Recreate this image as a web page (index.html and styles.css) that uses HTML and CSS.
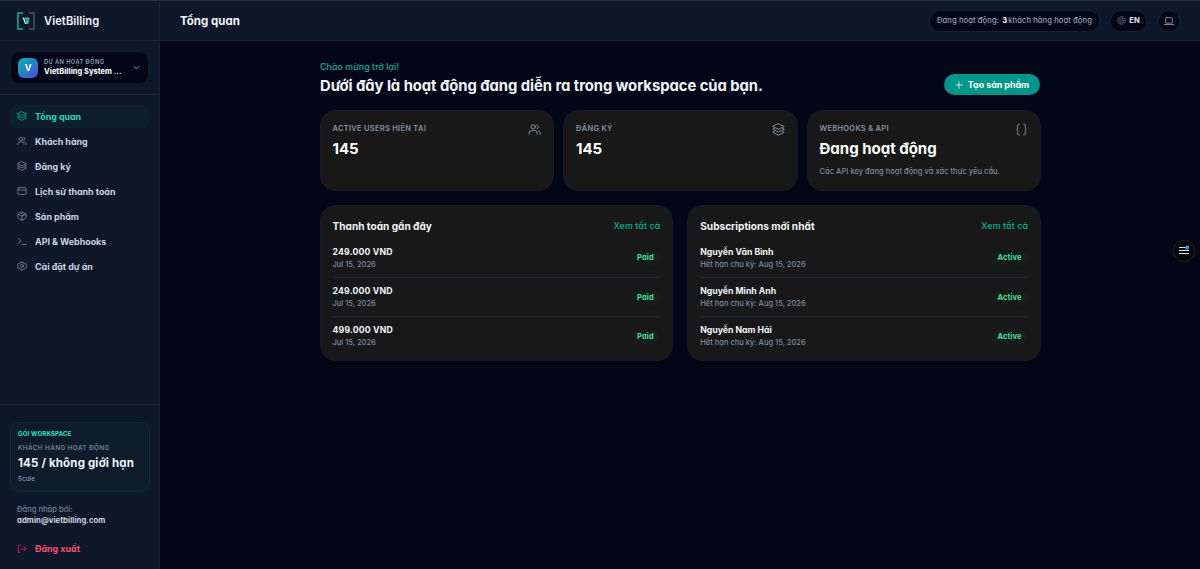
FILE: index.html
```html
<!DOCTYPE html>
<html lang="vi">
<head>
  <meta charset="UTF-8">
  <title>VietBilling - Tổng quan</title>
  <meta name="viewport" content="width=device-width, initial-scale=1.0">
  <link rel="stylesheet" href="styles.css">
</head>
<body>

  <!-- shared icons -->
  <svg class="sprite" width="0" height="0">
    <symbol id="layers" viewBox="0 0 24 24">
      <path d="M12 1.500 22.500 6.500 12 11.500 1.500 6.500zM5 9.500l-3.500 2L12 16.500l10.500-5-3.500-2M5 15l-3.500 2L12 22.500l10.500-5.500-3.500-2"/>
    </symbol>
    <symbol id="users" viewBox="0 0 24 24">
      <circle cx="9.500" cy="7" r="4"/>
      <path d="M2 21v-2a5 5 0 0 1 5-5h5a5 5 0 0 1 5 5v2M16.500 3.200a4 4 0 0 1 0 7.600M19 14.300A5 5 0 0 1 22.500 19v2"/>
    </symbol>
    <symbol id="card" viewBox="0 0 24 24">
      <rect x="2" y="4" width="20" height="16" rx="2.500"/>
      <path d="M2 9.500h20"/>
    </symbol>
    <symbol id="box" viewBox="0 0 24 24">
      <path d="M12 2l7 3.200L22 9v6l-3 4-7 3-7-3-3-4V9l3-3.800zM3 8l9 4.500L21 8M12 12.500V22M7.500 4.500l9 4.500"/>
    </symbol>
    <symbol id="terminal" viewBox="0 0 24 24">
      <path d="M3 5l7 6.500L3 18M12 20h10"/>
    </symbol>
    <symbol id="gear" viewBox="0 0 24 24">
      <path d="M10 2h4l1 3 3 1.700 3-.7 2 3.500L21 12l2 2.500-2 3.500-3-.7-3 1.700-1 3h-4l-1-3-3-1.700-3 .7-2-3.500L3 12 1 9.500 3 6l3 .7L9 5z"/>
      <circle cx="12" cy="12" r="3.500"/>
    </symbol>
    <symbol id="logout" viewBox="0 0 24 24">
      <path d="M8 3H5a2 2 0 0 0-2 2v14a2 2 0 0 0 2 2h3M9 12h13M17 7l5 5-5 5"/>
    </symbol>
    <symbol id="chevron" viewBox="0 0 24 24">
      <path d="M3 8l9 9 9-9"/>
    </symbol>
    <symbol id="globe" viewBox="0 0 24 24">
      <circle cx="12" cy="12" r="10.500"/>
      <path d="M1.500 12h21M3.500 7h17M3.500 17h17M12 1.500c-6 6-6 15 0 21M12 1.500c6 6 6 15 0 21"/>
    </symbol>
    <symbol id="laptop" viewBox="0 0 24 24">
      <rect x="4" y="4" width="16" height="13" rx="1.500"/>
      <path d="M1 20.500h22"/>
    </symbol>
    <symbol id="plus" viewBox="0 0 24 24">
      <path d="M12 2v20M2 12h20"/>
    </symbol>
    <symbol id="braces" viewBox="0 0 24 24">
      <path d="M8 2H7a2 2 0 0 0-2 2v5a3 3 0 0 1-2 3 3 3 0 0 1 2 3v5a2 2 0 0 0 2 2h1M16 2h1a2 2 0 0 1 2 2v5a3 3 0 0 0 2 3 3 3 0 0 0-2 3v5a2 2 0 0 1-2 2h-1"/>
    </symbol>
  </svg>

  <div class="app">
    <aside class="sidebar">
      <div class="brand">
        <svg class="logo" viewBox="0 0 18 18">
          <path d="M6 1H1v16h5" stroke="#00b69d"/>
          <path d="M12 1h5v16h-5" stroke="#475569"/>
          <path class="mark" d="M5.500 5.500h1.700L9.200 12H8z" fill="#e2e8f0"/>
          <path class="mark" d="M8 5.500h4.500l-.8 2.700.5.800L11 12H9.200z" fill="#14d3ae"/>
          <path d="M8.600 8.200h2.200" stroke="#0f172a" stroke-width=".6"/>
        </svg>
        <span class="brand-name">VietBilling</span>
      </div>

      <div class="project-wrap">
        <div class="project">
          <div class="avatar">V</div>
          <div class="project-text">
            <div class="project-label">DỰ ÁN HOẠT ĐỘNG</div>
            <div class="project-name">VietBilling System ...</div>
          </div>
          <svg class="icon chevron"><use href="#chevron"/></svg>
        </div>
      </div>

      <nav class="nav">
        <a class="nav-item active"><svg class="icon"><use href="#layers"/></svg><span>Tổng quan</span></a>
        <a class="nav-item"><svg class="icon"><use href="#users"/></svg><span>Khách hàng</span></a>
        <a class="nav-item"><svg class="icon"><use href="#layers"/></svg><span>Đăng ký</span></a>
        <a class="nav-item"><svg class="icon"><use href="#card"/></svg><span>Lịch sử thanh toán</span></a>
        <a class="nav-item"><svg class="icon"><use href="#box"/></svg><span>Sản phẩm</span></a>
        <a class="nav-item"><svg class="icon"><use href="#terminal"/></svg><span>API &amp; Webhooks</span></a>
        <a class="nav-item"><svg class="icon"><use href="#gear"/></svg><span>Cài đặt dự án</span></a>
      </nav>

      <div class="side-footer">
        <div class="plan">
          <div class="plan-tag">GÓI WORKSPACE</div>
          <div class="plan-label">KHÁCH HÀNG HOẠT ĐỘNG</div>
          <div class="plan-value">145 / không giới hạn</div>
          <div class="plan-name">Scale</div>
        </div>
        <div class="account">
          <div class="account-label">Đăng nhập bởi:</div>
          <div class="account-mail">admin@vietbilling.com</div>
        </div>
        <a class="logout"><svg class="icon"><use href="#logout"/></svg><span>Đăng xuất</span></a>
      </div>
    </aside>

    <div class="page">
      <header class="topbar">
        <h1>Tổng quan</h1>
        <div class="top-actions">
          <div class="pill usage"><span>Đang hoạt động:</span> <b>3</b> <span>khách hàng hoạt động</span></div>
          <div class="pill lang"><svg class="icon"><use href="#globe"/></svg>EN</div>
          <div class="pill theme"><svg class="icon"><use href="#laptop"/></svg></div>
        </div>
      </header>

      <main class="content">
        <div class="intro">
          <div>
            <div class="welcome">Chào mừng trở lại!</div>
            <h2>Dưới đây là hoạt động đang diễn ra trong workspace của bạn.</h2>
          </div>
          <button class="create"><svg class="icon"><use href="#plus"/></svg><span>Tạo sản phẩm</span></button>
        </div>

        <div class="stats">
          <div class="card stat">
            <div>
              <div class="stat-label">ACTIVE USERS HIỆN TẠI</div>
              <div class="stat-value">145</div>
            </div>
            <svg class="icon"><use href="#users"/></svg>
          </div>
          <div class="card stat">
            <div>
              <div class="stat-label">ĐĂNG KÝ</div>
              <div class="stat-value">145</div>
            </div>
            <svg class="icon"><use href="#layers"/></svg>
          </div>
          <div class="card stat">
            <div>
              <div class="stat-label">WEBHOOKS &amp; API</div>
              <div class="stat-value">Đang hoạt động</div>
              <div class="stat-note">Các API key đang hoạt động và xác thực yêu cầu.</div>
            </div>
            <svg class="icon"><use href="#braces"/></svg>
          </div>
        </div>

        <div class="panels">
          <section class="card panel">
            <div class="panel-head"><h3>Thanh toán gần đây</h3><a>Xem tất cả</a></div>
            <div class="row amount"><div><div class="row-title">249.000 VND</div><div class="row-sub">Jul 15, 2026</div></div><span class="badge">Paid</span></div>
            <div class="row amount"><div><div class="row-title">249.000 VND</div><div class="row-sub">Jul 15, 2026</div></div><span class="badge">Paid</span></div>
            <div class="row amount"><div><div class="row-title">499.000 VND</div><div class="row-sub">Jul 15, 2026</div></div><span class="badge">Paid</span></div>
          </section>
          <section class="card panel">
            <div class="panel-head"><h3>Subscriptions mới nhất</h3><a>Xem tất cả</a></div>
            <div class="row"><div><div class="row-title">Nguyễn Văn Bình</div><div class="row-sub">Hết hạn chu kỳ: Aug 15, 2026</div></div><span class="badge">Active</span></div>
            <div class="row"><div><div class="row-title">Nguyễn Minh Anh</div><div class="row-sub">Hết hạn chu kỳ: Aug 15, 2026</div></div><span class="badge">Active</span></div>
            <div class="row"><div><div class="row-title">Nguyễn Nam Hải</div><div class="row-sub">Hết hạn chu kỳ: Aug 15, 2026</div></div><span class="badge">Active</span></div>
          </section>
        </div>
      </main>
    </div>
  </div>

  <div class="float-btn">
    <svg viewBox="0 0 20 20">
      <path d="M5 6.500h10M5 9.500h10M5 12.500h10" stroke="#e5e7eb" stroke-width="1.200"/>
      <circle cx="13.200" cy="6.500" r="1.900" fill="#3b9cff"/>
    </svg>
  </div>

</body>
</html>
```
FILE: styles.css
```css
* {
  box-sizing: border-box;
}

body {
  margin: 0;
  height: 569px;
  overflow: hidden;
  background: #020617;
  color: #f1f5f9;
  font-family: Inter, "Open Sans", sans-serif;
  font-feature-settings: "cv11";
  font-size: 9px;
  white-space: nowrap;
}

h1, h2, h3 {
  margin: 0;
}

.sprite {
  position: absolute;
}

.icon {
  display: block;
  flex: none;
  width: 10px;
  height: 10px;
  fill: none;
  stroke: currentColor;
  stroke-width: 1.8;
  stroke-linecap: round;
  stroke-linejoin: round;
}

.app {
  display: flex;
  height: 569px;
  border-top: 1px solid #2b313b;
}

/* sidebar */
.sidebar {
  display: flex;
  flex-direction: column;
  flex: none;
  width: 160px;
  background: #0f172a;
  border-right: 1px solid #1a2538;
}

.brand {
  display: flex;
  align-items: center;
  gap: 9px;
  height: 40px;
  padding-left: 17px;
  border-bottom: 1px solid #1a2538;
}

.logo {
  width: 18px;
  height: 18px;
  fill: none;
  stroke-width: 1.5;
}

.mark {
  stroke: none;
}

.brand-name {
  font-size: 11.2px;
  font-weight: 600;
  letter-spacing: 0.06px;
}

.project-wrap {
  height: 54px;
  padding: 10px 10px 0;
  border-bottom: 1px solid #1a2538;
}

.project {
  display: flex;
  align-items: center;
  height: 33px;
  padding: 0 8px 0 7px;
  background: #020617;
  border: 1px solid #121c2f;
  border-radius: 9px;
}

.avatar {
  width: 20px;
  height: 20px;
  border-radius: 6px;
  background: linear-gradient(135deg, #00bba7, #4f46e5);
  color: #fff;
  font-size: 9px;
  font-weight: 700;
  line-height: 20px;
  text-align: center;
}

.project-text {
  flex: 1;
  margin-left: 6px;
  padding-bottom: 1px;
}

.project-label {
  color: #94a3b8;
  font-size: 5.7px;
  font-weight: 600;
  line-height: 9px;
  letter-spacing: 0.43px;
}

.project-name {
  font-size: 7.4px;
  font-weight: 800;
  line-height: 12px;
  letter-spacing: 0.05px;
}

.chevron {
  width: 7px;
  height: 7px;
  color: #94a3b8;
  stroke-width: 3;
}

.nav {
  flex: 1;
  padding: 10px 10px 0;
}

.nav-item {
  display: flex;
  align-items: center;
  gap: 8px;
  height: 23px;
  margin-bottom: 2px;
  padding: 0 0 1px 7px;
  border-radius: 7px;
  color: #cbd5e1;
  font-size: 8.9px;
  font-weight: 650;
}

.nav-item .icon {
  color: #8391a7;
}

.nav-item.active {
  background: #0d1f2d;
  color: #2dd4bf;
}

.nav-item.active .icon {
  color: #00b39b;
}

.side-footer {
  height: 165px;
  padding: 17px 9px 0 10px;
  border-top: 1px solid #1a2538;
}

.plan {
  height: 70px;
  padding: 6px 7px 0;
  background: #0d1b2a;
  border: 1px solid #0d2b37;
  border-radius: 9px;
}

.plan-tag {
  color: #2ee6c0;
  font-size: 6px;
  font-weight: 750;
  line-height: 10px;
  letter-spacing: 0.22px;
}

.plan-label {
  margin-top: 4px;
  color: #8593a8;
  font-size: 6.3px;
  font-weight: 500;
  line-height: 10px;
  letter-spacing: 0.47px;
}

.plan-value {
  margin-top: 1px;
  font-size: 11.5px;
  font-weight: 750;
  line-height: 18px;
  letter-spacing: 0.16px;
}

.plan-name {
  margin-top: 3px;
  color: #8f9db2;
  font-size: 6.3px;
  font-weight: 500;
  line-height: 8px;
}

.account {
  margin-top: 12px;
  padding-left: 7px;
}

.account-label {
  color: #75849b;
  font-size: 7.6px;
  font-weight: 500;
  line-height: 11px;
}

.account-mail {
  color: #cbd5e1;
  font-size: 7.7px;
  font-weight: 650;
  line-height: 11px;
  letter-spacing: 0.06px;
}

.logout {
  display: flex;
  align-items: center;
  gap: 8px;
  margin-top: 16px;
  padding-left: 7px;
  color: #fb4f70;
  font-size: 8.9px;
  font-weight: 650;
  line-height: 13px;
}

.logout .icon {
  color: #d91c56;
  stroke-width: 2.2;
}

/* top bar */
.page {
  flex: 1;
}

.topbar {
  display: flex;
  align-items: center;
  justify-content: space-between;
  height: 40px;
  padding: 0 20px;
  background: #0f172a;
  border-bottom: 1px solid #1a2538;
}

.topbar h1 {
  font-size: 11.5px;
  font-weight: 700;
}

.top-actions {
  display: flex;
}

.pill {
  display: flex;
  align-items: center;
  justify-content: center;
  height: 22px;
  background: #020617;
  border: 1px solid #162033;
  border-radius: 11px;
  color: #94a3b8;
  font-size: 7.6px;
  font-weight: 550;
}

.usage {
  width: 171px;
  letter-spacing: 0.09px;
}

.usage b {
  margin: 0 1px 0 3px;
  color: #fff;
  font-weight: 700;
}

.lang {
  gap: 3px;
  width: 37px;
  margin-left: 10px;
  color: #e2e8f0;
  font-weight: 700;
}

.lang .icon {
  width: 9px;
  height: 9px;
  color: #64748b;
  stroke-width: 1.3;
}

.theme {
  width: 22px;
  margin-left: 11px;
}

.theme .icon {
  stroke-width: 2;
}

/* dashboard */
.content {
  width: 721.5px;
  margin-left: 159.5px;
  padding-top: 19px;
}

.intro {
  display: flex;
  justify-content: space-between;
  height: 50px;
  padding: 0 1px 0 0.5px;
}

.welcome {
  color: #00b39b;
  font-size: 8.8px;
  font-weight: 550;
  line-height: 14px;
  letter-spacing: 0.08px;
}

h2 {
  font-size: 14.8px;
  font-weight: 650;
  line-height: 24px;
  letter-spacing: -0.04px;
}

.create {
  display: flex;
  align-items: center;
  justify-content: center;
  gap: 5px;
  width: 96px;
  height: 21px;
  margin-top: 14px;
  padding: 0;
  border: 0;
  border-radius: 11px;
  background: #009689;
  color: #fff;
  font: inherit;
  font-size: 8.9px;
  font-weight: 650;
}

.create .icon {
  width: 8px;
  height: 8px;
  stroke-width: 2.2;
}

.card {
  background: #181818;
  border: 1px solid #171a24;
  border-radius: 15px;
}

.stats {
  display: grid;
  grid-template-columns: repeat(3, 1fr);
  gap: 9px;
}

.stat {
  display: flex;
  justify-content: space-between;
  height: 81px;
  padding: 12px 12px 0;
}

.stat .icon {
  width: 13px;
  height: 13px;
  color: #8491a6;
}

.stat-label {
  color: #8491a6;
  font-size: 7.5px;
  font-weight: 600;
  line-height: 12px;
  letter-spacing: 0.27px;
}

.stat-value {
  margin-top: 4px;
  color: #fff;
  font-size: 15px;
  font-weight: 700;
  line-height: 20px;
}

.stat-note {
  margin-top: 7px;
  color: #7c8ba1;
  font-size: 7.5px;
  font-weight: 450;
  line-height: 12px;
  letter-spacing: 0.03px;
}

.panels {
  display: grid;
  grid-template-columns: 1fr 1fr;
  gap: 14px;
  margin-top: 14px;
}

.panel {
  height: 156px;
  padding: 12px 12px 0;
}

.panel-head {
  display: flex;
  justify-content: space-between;
  height: 20px;
  line-height: 16px;
}

.panel-head h3 {
  font-size: 10.1px;
  font-weight: 650;
}

.panel-head a {
  color: #00b39b;
  font-size: 8.9px;
  font-weight: 550;
  letter-spacing: 0.07px;
}

.row {
  display: flex;
  align-items: center;
  justify-content: space-between;
  height: 39px;
  padding-top: 1px;
}

.row + .row {
  border-top: 1px solid #1d293d;
}

.row-title {
  font-size: 8.7px;
  font-weight: 700;
  line-height: 13px;
}

.amount .row-title {
  letter-spacing: 0.18px;
}

.row-sub {
  color: #7c8ba1;
  font-size: 7.5px;
  font-weight: 450;
  line-height: 12px;
}

.badge {
  padding: 0 6.5px;
  border-radius: 7px;
  background: #141e1b;
  color: #4ade97;
  font-size: 7.5px;
  font-weight: 650;
  line-height: 14px;
  letter-spacing: 0.1px;
}

/* floating widget */
.float-btn {
  position: fixed;
  top: 240px;
  right: 5px;
  width: 22px;
  height: 22px;
  background: #050505;
  border: 1px solid #272727;
  border-radius: 50%;
}

.float-btn svg {
  display: block;
  width: 20px;
  height: 20px;
}
```
